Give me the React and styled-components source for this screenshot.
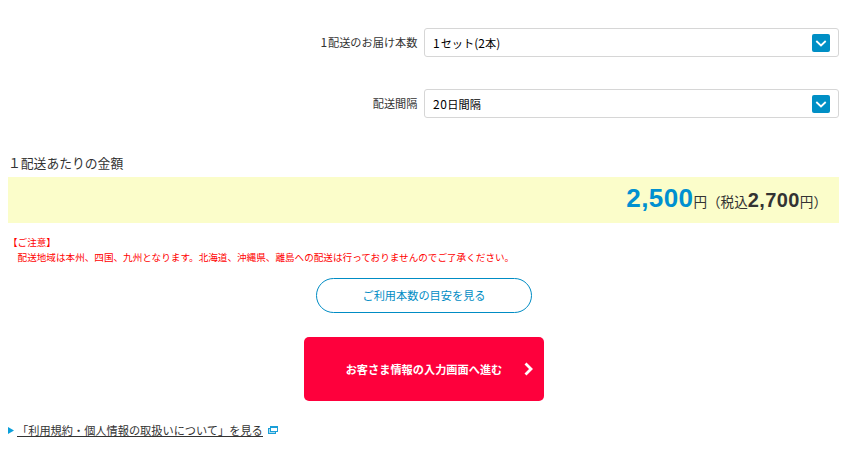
import React from "react";
import styled, { createGlobalStyle } from "styled-components";

const GlobalStyle = createGlobalStyle`
  * { box-sizing: border-box; }
  body {
    margin: 0;
    background: #fff;
    color: #333;
    font-family: "Noto Sans CJK JP", sans-serif;
    font-size: 11.2px;
  }
`;

const Page = styled.main`
  width: 831px;
  margin-left: 8px;
  padding-top: 28px;
`;

const Field = styled.div`
  display: grid;
  grid-template-columns: 409.5px 415px;
  grid-template-rows: 29px;
  column-gap: 6.5px;
  align-items: start;
  height: 29px;
  margin-bottom: 32px;
`;

const Label = styled.label`
  text-align: right;
  line-height: 29px;
`;

const SelectBox = styled.button`
  display: flex;
  align-items: center;
  justify-content: space-between;
  height: 29px;
  padding: 0 8px;
  border: 1px solid #d6d6d6;
  border-radius: 3px;
  background: #fff;
  color: #000;
  font-family: "Noto Sans CJK JP", sans-serif;
  font-size: 11.2px;
  line-height: 27px;
`;

const SelectText = styled.span`
  padding-top: 2px;
`;

const Digits = styled.span`
  letter-spacing: ${(p) => p.$spacing || "0"};
  font-size: 12px;
  line-height: 1;
`;

const Chevron = styled.svg`
  display: block;
  width: 18px;
  height: 18px;
`;

const Heading = styled.h2`
  margin: -1px 0 0;
  height: 28px;
  font-size: 12.8px;
  font-weight: 400;
  line-height: 27px;
`;

const PriceBar = styled.div`
  display: flex;
  justify-content: flex-end;
  align-items: baseline;
  height: 46px;
  padding: 0 12px;
  background: #fbfdca;
  font-size: 13.6px;
  line-height: 42px;
`;

const Amount = styled.strong`
  font-family: "Liberation Sans", Arial, sans-serif;
  font-weight: 700;
  font-size: ${(p) => (p.$main ? "26px" : "20px")};
  letter-spacing: 0.4px;
  color: ${(p) => (p.$main ? "#0090d0" : "#333")};
  line-height: 42px;
`;

const Notice = styled.p`
  margin: 12px 0 0;
  height: 43px;
  color: #f00;
  font-size: 9.6px;
  line-height: 15px;
  white-space: pre;
`;

const GuideButton = styled.button`
  display: block;
  width: 216px;
  height: 35px;
  margin: 0 auto 24px 308px;
  padding: 0;
  border: 1px solid #008cc4;
  border-radius: 18px;
  background: #fff;
  color: #008cc4;
  font-family: "Noto Sans CJK JP", sans-serif;
  font-size: 11.2px;
  line-height: 33px;
`;

const SubmitButton = styled.button`
  display: grid;
  grid-template-columns: 1fr 9px;
  align-items: center;
  width: 240px;
  height: 64px;
  margin-left: 296px;
  padding: 0 11px 0 9px;
  border: 0;
  border-radius: 5px;
  background: #fe003c;
  color: #fff;
  font-family: "Noto Sans CJK JP", sans-serif;
  font-size: 11.2px;
  font-weight: 700;
  text-align: center;
`;

const SubmitText = styled.span`
  padding-left: 11px;
`;

const Terms = styled.div`
  display: flex;
  align-items: center;
  height: 18px;
  margin-top: 20px;
`;

const TermsLink = styled.a`
  align-self: flex-start;
  height: 15px;
  margin: 1px 5px 0 3px;
  border-bottom: 1px solid #333;
  line-height: 16px;
`;

function SelectField({ label, children }) {
  return (
    <Field>
      <Label>{label}</Label>
      <SelectBox type="button">
        <SelectText>{children}</SelectText>
        <Chevron viewBox="0 0 18 18">
          <rect width="18" height="18" rx="2" fill="#008fc5" />
          <path d="M4.3 7 9 11.5 13.7 7" fill="none" stroke="#fff" strokeWidth="1.8" />
        </Chevron>
      </SelectBox>
    </Field>
  );
}

export default function App() {
  return (
    <>
      <GlobalStyle />
      <Page>
        <SelectField label={<><Digits $spacing="0.7px">1</Digits>配送のお届け本数</>}>
          <Digits $spacing="1px">1</Digits>セット<Digits>(2</Digits>本<Digits>)</Digits>
        </SelectField>
        <SelectField label="配送間隔">
          <Digits $spacing="0.5px">20</Digits>日間隔
        </SelectField>
        <Heading>１配送あたりの金額</Heading>
        <PriceBar>
          <Amount $main>2,500</Amount>円（税込<Amount>2,700</Amount>円）
        </PriceBar>
        <Notice>{"【ご注意】\n　配送地域は本州、四国、九州となります。北海道、沖縄県、離島への配送は行っておりませんのでご了承ください。"}</Notice>
        <GuideButton type="button">ご利用本数の目安を見る</GuideButton>
        <SubmitButton type="button">
          <SubmitText>お客さま情報の入力画面へ進む</SubmitText>
          <svg width="9" height="14" viewBox="0 0 9 14">
            <path d="M1.5 1.5 7 7 1.5 12.5" fill="none" stroke="#fff" strokeWidth="2.8" />
          </svg>
        </SubmitButton>
        <Terms>
          <svg width="6" height="7" viewBox="0 0 6 7">
            <path d="M0 0 6 3.5 0 7Z" fill="#0a9fda" />
          </svg>
          <TermsLink>「利用規約・個人情報の取扱いについて」を見る</TermsLink>
          <svg width="10" height="8" viewBox="0 0 10 8">
            <path d="M0 2H2V0H10V6H8V8H0Z" fill="#1a9fd8" />
            <path d="M3 2H9V5H3Z" fill="#fff" />
            <path d="M1 3H2V6H7V7H1Z" fill="#a8dcf2" />
          </svg>
        </Terms>
      </Page>
    </>
  );
}
